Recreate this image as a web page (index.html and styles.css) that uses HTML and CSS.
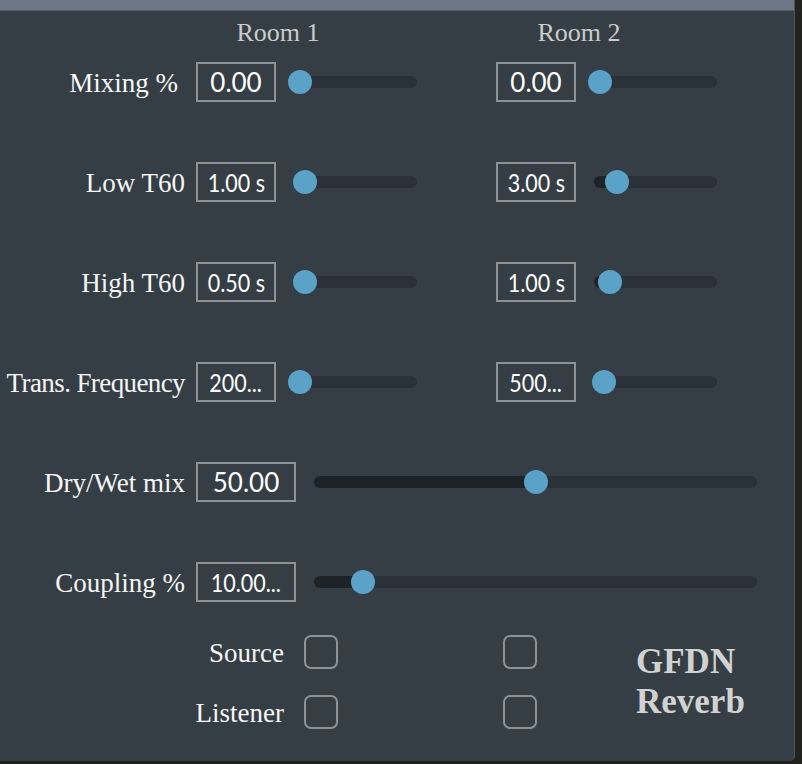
FILE: index.html
```html
<!DOCTYPE html>
<html>
<head>
<meta charset="utf-8">
<link rel="stylesheet" href="styles.css">
</head>
<body>
<div class="panel">
  <div class="topbar"></div>
  <div class="header">
    <div class="room r1">Room 1</div>
    <div class="room r2">Room 2</div>
  </div>
  <div class="rows">
    <div class="row">
      <div class="label label-mix">Mixing %</div>
      <div class="box"><span class="val">0.00</span></div>
      <div class="slider"><div class="fill" style="width:6px"></div><div class="thumb" style="left:6px"></div></div>
      <div class="box box2"><span class="val">0.00</span></div>
      <div class="slider"><div class="fill" style="width:6px"></div><div class="thumb" style="left:6px"></div></div>
    </div>
    <div class="row">
      <div class="label">Low T60</div>
      <div class="box"><span class="val cond">1.00 s</span></div>
      <div class="slider"><div class="fill" style="width:11px"></div><div class="thumb" style="left:11px"></div></div>
      <div class="box box2"><span class="val cond">3.00 s</span></div>
      <div class="slider"><div class="fill" style="width:23px"></div><div class="thumb" style="left:23px"></div></div>
    </div>
    <div class="row">
      <div class="label">High T60</div>
      <div class="box"><span class="val cond">0.50 s</span></div>
      <div class="slider"><div class="fill" style="width:11px"></div><div class="thumb" style="left:11px"></div></div>
      <div class="box box2"><span class="val cond">1.00 s</span></div>
      <div class="slider"><div class="fill" style="width:16px"></div><div class="thumb" style="left:16px"></div></div>
    </div>
    <div class="row">
      <div class="label label-tight">Trans. Frequency</div>
      <div class="box"><span class="val cond">200...</span></div>
      <div class="slider"><div class="fill" style="width:6px"></div><div class="thumb" style="left:6px"></div></div>
      <div class="box box2"><span class="val cond">500...</span></div>
      <div class="slider"><div class="fill" style="width:10px"></div><div class="thumb" style="left:10px"></div></div>
    </div>
    <div class="row">
      <div class="label">Dry/Wet mix</div>
      <div class="box box-wide"><span class="val">50.00</span></div>
      <div class="slider slider-wide"><div class="fill" style="width:222px"></div><div class="thumb" style="left:222px"></div></div>
    </div>
    <div class="row">
      <div class="label">Coupling %</div>
      <div class="box box-wide"><span class="val cond">10.00...</span></div>
      <div class="slider slider-wide"><div class="fill" style="width:49px"></div><div class="thumb" style="left:49px"></div></div>
    </div>
  </div>
  <div class="bottom">
    <div class="checks">
      <div class="check-row">
        <div class="check-label">Source</div>
        <div class="cb"></div>
        <div class="cb cb2"></div>
      </div>
      <div class="check-row">
        <div class="check-label">Listener</div>
        <div class="cb"></div>
        <div class="cb cb2"></div>
      </div>
    </div>
    <div class="logo">GFDN<br>Reverb</div>
  </div>
</div>
</body>
</html>
```

FILE: styles.css
```css
html, body {
  margin: 0;
  padding: 0;
  background: #22231f;
}
body {
  width: 802px;
  height: 764px;
  overflow: hidden;
  font-family: "Liberation Serif", "Times New Roman", serif;
}
.panel {
  width: 795px;
  height: 761px;
  background: #363e45;
  border-right: 1px solid #4a5259;
  border-bottom-right-radius: 5px;
  box-sizing: border-box;
}
.topbar {
  height: 10px;
  background: #6b7785;
  border-bottom: 1px solid #525b65;
}
.header {
  height: 51px;
  position: relative;
}
.room {
  position: absolute;
  top: 7px;
  width: 120px;
  text-align: center;
  font-size: 26px;
  line-height: 30px;
  color: #cbcbcb;
}
.r1 { left: 218px; }
.r2 { left: 519px; }
.rows {
  display: flex;
  flex-direction: column;
  gap: 60px;
}
.row {
  display: flex;
  align-items: center;
  height: 40px;
}
.label {
  width: 185px;
  text-align: right;
  font-size: 27px;
  line-height: 40px;
  padding-top: 2px;
  color: #f6f6f6;
  white-space: nowrap;
  margin-right: 11px;
  box-sizing: border-box;
}
.label-mix { padding-right: 7px; }
.label-tight { letter-spacing: -0.6px; }
.box {
  width: 80px;
  height: 40px;
  box-sizing: border-box;
  border: 2px solid #8c9295;
  display: flex;
  align-items: center;
  justify-content: center;
  font-family: Lato, "Open Sans", sans-serif;
  color: #ffffff;
  font-size: 26px;
  margin-right: 18px;
}
.box2 { margin-left: 79px; }
.box-wide { width: 100px; }
.val {
  display: inline-block;
  line-height: 36px;
}
.cond {
  font-size: 25px;
  transform: scaleX(0.86);
}
.slider {
  position: relative;
  width: 123px;
  height: 12px;
  border-radius: 6px;
  background: #2b3138;
}
.slider-wide { width: 443px; }
.fill {
  position: absolute;
  left: 0;
  top: 0;
  bottom: 0;
  border-radius: 6px;
  background: #1e2327;
}
.thumb {
  position: absolute;
  top: 50%;
  width: 24px;
  height: 24px;
  border-radius: 50%;
  background: #5ba2c8;
  transform: translate(-50%, -50%);
}
.bottom {
  display: flex;
  margin-top: 33px;
}
.checks {
  display: flex;
  flex-direction: column;
  gap: 26px;
}
.check-row {
  display: flex;
  align-items: center;
  height: 34px;
}
.check-label {
  width: 284px;
  text-align: right;
  font-size: 27px;
  line-height: 34px;
  padding-top: 2px;
  color: #f6f6f6;
  margin-right: 20px;
  box-sizing: border-box;
}
.cb {
  width: 34px;
  height: 34px;
  box-sizing: border-box;
  border: 2px solid #8c9295;
  border-radius: 7px;
}
.cb2 { margin-left: 165px; }
.logo {
  margin-top: 7px;
  margin-left: 99px;
  font-weight: bold;
  font-size: 35px;
  line-height: 40px;
  color: #d2d2d2;
}
```
